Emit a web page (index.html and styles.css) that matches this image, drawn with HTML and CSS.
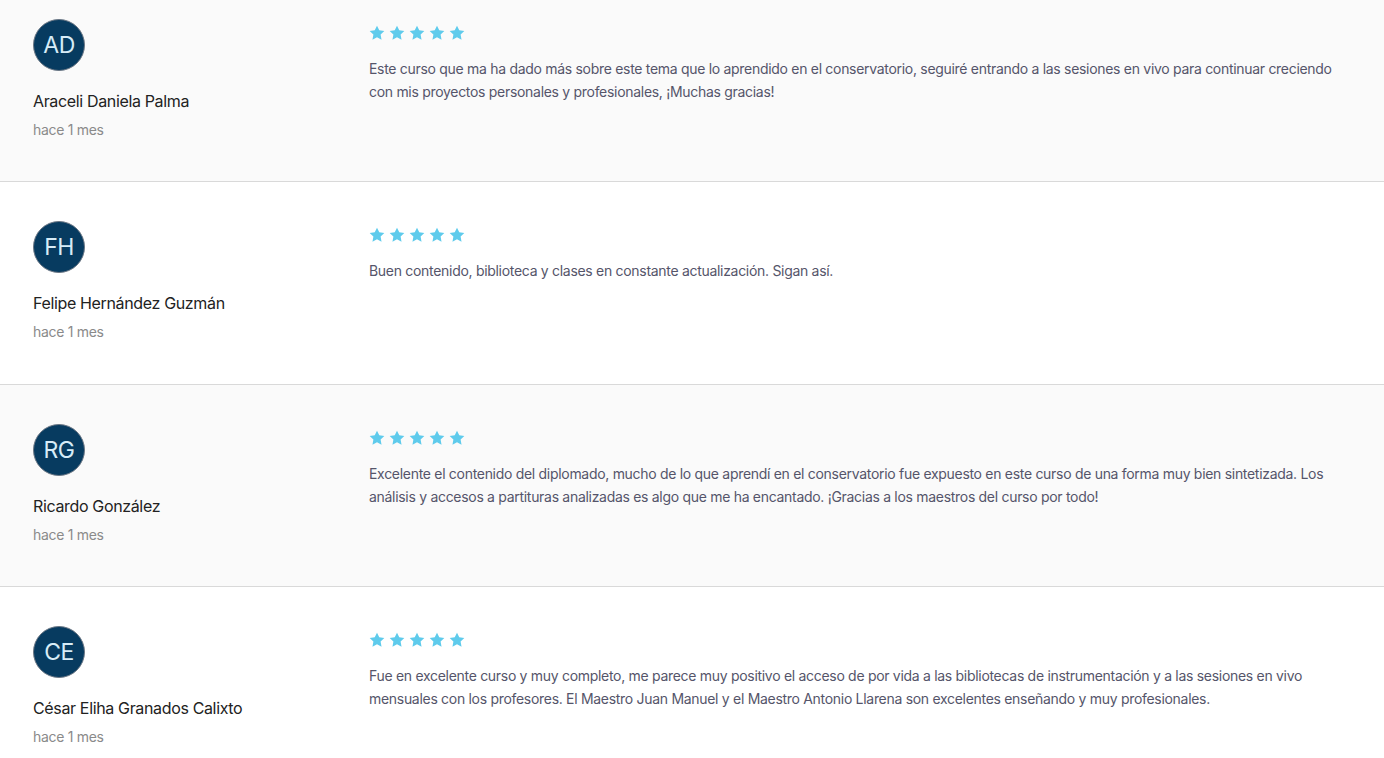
FILE: index.html
```html
<!DOCTYPE html>
<html lang="es">
<head>
  <meta charset="UTF-8" />
  <title>Reseñas</title>
  <link rel="stylesheet" href="styles.css">
</head>
<body>
  <section class="reviews">

    <!-- Review 1 -->
    <article class="review alt">
      <div class="author">
        <div class="avatar">AD</div>
        <p class="name">Araceli Daniela Palma</p>
        <p class="date">hace 1 mes</p>
      </div>
      <div class="body">
        <div class="stars">
          <svg viewBox="0 0 24 24"><path d="M12 1l3.4 7 7.6 1-5.6 5.3 1.4 7.7L12 18.3 5.2 22l1.4-7.7L1 9l7.6-1z"/></svg>
          <svg viewBox="0 0 24 24"><path d="M12 1l3.4 7 7.6 1-5.6 5.3 1.4 7.7L12 18.3 5.2 22l1.4-7.7L1 9l7.6-1z"/></svg>
          <svg viewBox="0 0 24 24"><path d="M12 1l3.4 7 7.6 1-5.6 5.3 1.4 7.7L12 18.3 5.2 22l1.4-7.7L1 9l7.6-1z"/></svg>
          <svg viewBox="0 0 24 24"><path d="M12 1l3.4 7 7.6 1-5.6 5.3 1.4 7.7L12 18.3 5.2 22l1.4-7.7L1 9l7.6-1z"/></svg>
          <svg viewBox="0 0 24 24"><path d="M12 1l3.4 7 7.6 1-5.6 5.3 1.4 7.7L12 18.3 5.2 22l1.4-7.7L1 9l7.6-1z"/></svg>
        </div>
        <p class="text">Este curso que ma ha dado más sobre este tema que lo aprendido en el conservatorio, seguiré entrando a las sesiones en vivo para continuar creciendo con mis proyectos personales y profesionales, ¡Muchas gracias!</p>
      </div>
    </article>

    <!-- Review 2 -->
    <article class="review">
      <div class="author">
        <div class="avatar">FH</div>
        <p class="name">Felipe Hernández Guzmán</p>
        <p class="date">hace 1 mes</p>
      </div>
      <div class="body">
        <div class="stars">
          <svg viewBox="0 0 24 24"><path d="M12 1l3.4 7 7.6 1-5.6 5.3 1.4 7.7L12 18.3 5.2 22l1.4-7.7L1 9l7.6-1z"/></svg>
          <svg viewBox="0 0 24 24"><path d="M12 1l3.4 7 7.6 1-5.6 5.3 1.4 7.7L12 18.3 5.2 22l1.4-7.7L1 9l7.6-1z"/></svg>
          <svg viewBox="0 0 24 24"><path d="M12 1l3.4 7 7.6 1-5.6 5.3 1.4 7.7L12 18.3 5.2 22l1.4-7.7L1 9l7.6-1z"/></svg>
          <svg viewBox="0 0 24 24"><path d="M12 1l3.4 7 7.6 1-5.6 5.3 1.4 7.7L12 18.3 5.2 22l1.4-7.7L1 9l7.6-1z"/></svg>
          <svg viewBox="0 0 24 24"><path d="M12 1l3.4 7 7.6 1-5.6 5.3 1.4 7.7L12 18.3 5.2 22l1.4-7.7L1 9l7.6-1z"/></svg>
        </div>
        <p class="text">Buen contenido, biblioteca y clases en constante actualización. Sigan así.</p>
      </div>
    </article>

    <!-- Review 3 -->
    <article class="review alt">
      <div class="author">
        <div class="avatar">RG</div>
        <p class="name">Ricardo González</p>
        <p class="date">hace 1 mes</p>
      </div>
      <div class="body">
        <div class="stars">
          <svg viewBox="0 0 24 24"><path d="M12 1l3.4 7 7.6 1-5.6 5.3 1.4 7.7L12 18.3 5.2 22l1.4-7.7L1 9l7.6-1z"/></svg>
          <svg viewBox="0 0 24 24"><path d="M12 1l3.4 7 7.6 1-5.6 5.3 1.4 7.7L12 18.3 5.2 22l1.4-7.7L1 9l7.6-1z"/></svg>
          <svg viewBox="0 0 24 24"><path d="M12 1l3.4 7 7.6 1-5.6 5.3 1.4 7.7L12 18.3 5.2 22l1.4-7.7L1 9l7.6-1z"/></svg>
          <svg viewBox="0 0 24 24"><path d="M12 1l3.4 7 7.6 1-5.6 5.3 1.4 7.7L12 18.3 5.2 22l1.4-7.7L1 9l7.6-1z"/></svg>
          <svg viewBox="0 0 24 24"><path d="M12 1l3.4 7 7.6 1-5.6 5.3 1.4 7.7L12 18.3 5.2 22l1.4-7.7L1 9l7.6-1z"/></svg>
        </div>
        <p class="text">Excelente el contenido del diplomado, mucho de lo que aprendí en el conservatorio fue expuesto en este curso de una forma muy bien sintetizada. Los análisis y accesos a partituras analizadas es algo que me ha encantado. ¡Gracias a los maestros del curso por todo!</p>
      </div>
    </article>

    <!-- Review 4 -->
    <article class="review">
      <div class="author">
        <div class="avatar">CE</div>
        <p class="name">César Eliha Granados Calixto</p>
        <p class="date">hace 1 mes</p>
      </div>
      <div class="body">
        <div class="stars">
          <svg viewBox="0 0 24 24"><path d="M12 1l3.4 7 7.6 1-5.6 5.3 1.4 7.7L12 18.3 5.2 22l1.4-7.7L1 9l7.6-1z"/></svg>
          <svg viewBox="0 0 24 24"><path d="M12 1l3.4 7 7.6 1-5.6 5.3 1.4 7.7L12 18.3 5.2 22l1.4-7.7L1 9l7.6-1z"/></svg>
          <svg viewBox="0 0 24 24"><path d="M12 1l3.4 7 7.6 1-5.6 5.3 1.4 7.7L12 18.3 5.2 22l1.4-7.7L1 9l7.6-1z"/></svg>
          <svg viewBox="0 0 24 24"><path d="M12 1l3.4 7 7.6 1-5.6 5.3 1.4 7.7L12 18.3 5.2 22l1.4-7.7L1 9l7.6-1z"/></svg>
          <svg viewBox="0 0 24 24"><path d="M12 1l3.4 7 7.6 1-5.6 5.3 1.4 7.7L12 18.3 5.2 22l1.4-7.7L1 9l7.6-1z"/></svg>
        </div>
        <p class="text">Fue en excelente curso y muy completo, me parece muy positivo el acceso de por vida a las bibliotecas de instrumentación y a las sesiones en vivo mensuales con los profesores. El Maestro Juan Manuel y el Maestro Antonio Llarena son excelentes enseñando y muy profesionales.</p>
      </div>
    </article>

  </section>
</body>
</html>
```

FILE: styles.css
```css
/* Reset */
* {
  margin: 0;
  padding: 0;
  box-sizing: border-box;
}

html, body {
  background: #fff;
  font-family: 'Inter', 'Noto Sans', sans-serif;
  overflow: hidden;
}

/* List of reviews (scrolled a little, first row is cut at the top) */
.reviews {
  margin-top: -20px;
}

.review {
  display: flex;
  height: 202.3px;
  padding: 39px 33px 0 33px;
  border-bottom: 1px solid #d9d9d9;
  background: #fff;
}

.review.alt {
  background: #fafafa;
}

/* Author column */
.author {
  width: 336px;
  flex-shrink: 0;
}

.avatar {
  width: 52px;
  height: 52px;
  border-radius: 50%;
  background: #073b60;
  border: 1px solid #6b7785;
  color: #d7ecf7;
  font-size: 23px;
  font-weight: 400;
  letter-spacing: -0.5px;
  display: flex;
  align-items: center;
  justify-content: center;
}

.name {
  margin-top: 20px;
  font-size: 16px;
  line-height: 20px;
  color: #222;
  letter-spacing: -0.35px;
}

.date {
  margin-top: 10px;
  font-size: 14px;
  line-height: 18px;
  color: #8a8a8a;
  letter-spacing: -0.3px;
}

/* Review body */
.body {
  flex: 1;
  padding-top: 6px;
  padding-right: 14px;
}

.stars {
  display: flex;
  gap: 4px;
  height: 16px;
}

.stars svg {
  width: 16px;
  height: 16px;
  fill: #5fcbec;
}

.text {
  margin-top: 16px;
  font-size: 14px;
  line-height: 23px;
  color: #55556a;
  letter-spacing: -0.3px;
}
```
